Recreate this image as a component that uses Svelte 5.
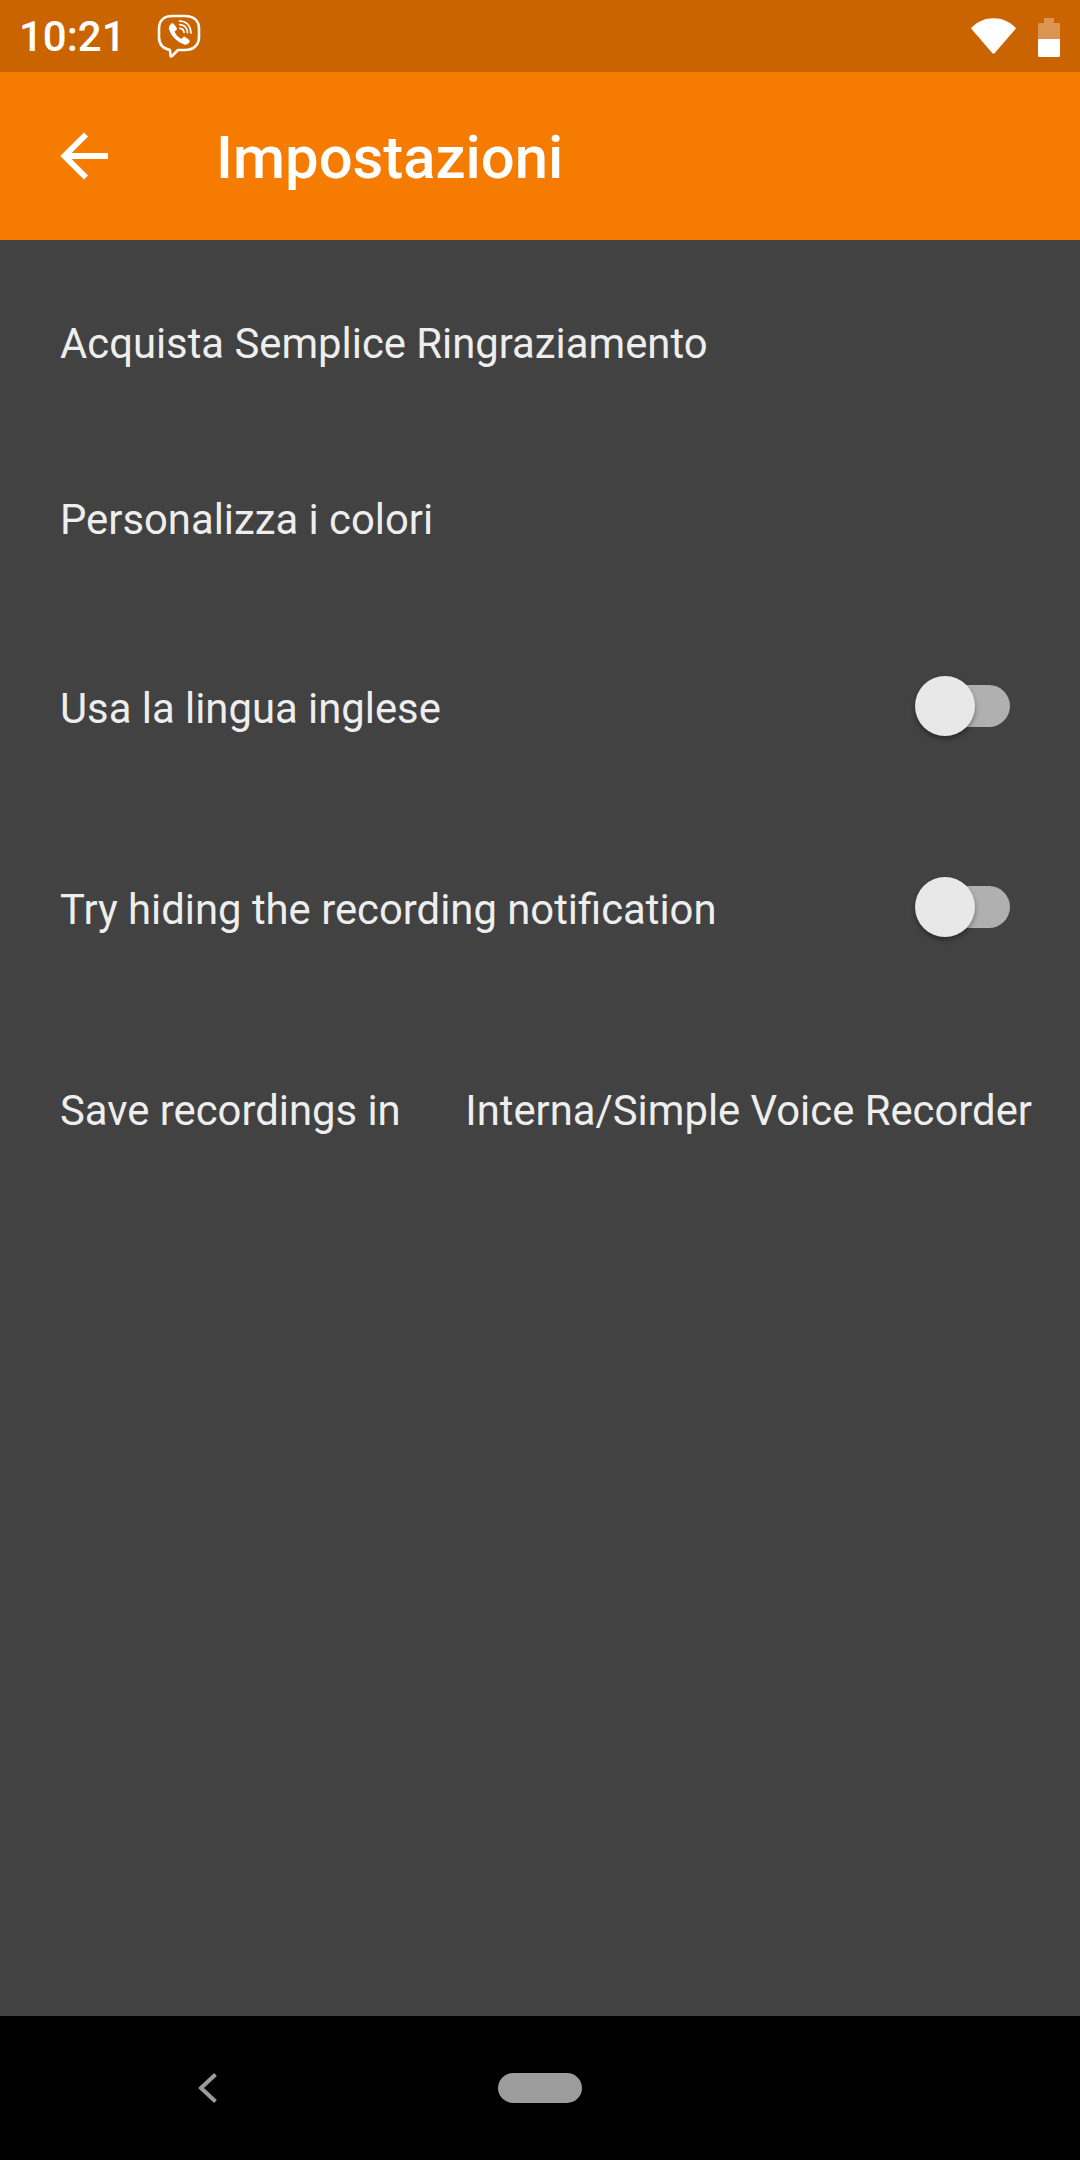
<script>
  const rows = [
    { label: "Acquista Semplice Ringraziamento", tall: false },
    { label: "Personalizza i colori", tall: false },
    { label: "Usa la lingua inglese", tall: true, toggle: true },
    { label: "Try hiding the recording notification", tall: true, toggle: true },
    { label: "Save recordings in", tall: true, value: "Interna/Simple Voice Recorder" }
  ];
</script>

<div class="screen">
  <header class="status">
    <span class="time">10:21</span>
    <svg class="viber" viewBox="0 0 46 46" width="46" height="46" fill="none" stroke="#fff">
      <path d="M14 37C6.500 35.500 3 31 3 24V16C3 7.500 8 3 16 3h13c8.500 0 14 4.500 14 13v8c0 8-5.500 13-14 13h-7l-6 6c-.8.700-1.500.4-1.500-.6z" stroke-width="2.600" stroke-linejoin="round" />
      <path d="M14.500 11c1.500-1 2.700-.8 3.700.5l2.200 3.100c.8 1.200.6 2.200-.5 3l-1.300 1c.8 3 3.500 6 7 7.500l1-1.400c.8-1 1.800-1.100 2.900-.4l3.200 2.200c1.200 1 1.200 2.100.3 3.300-1.200 1.700-3 2.300-4.800 1.700-7.500-2.700-12.900-8.200-15.200-15.200-.5-2 .3-3.800 1.900-5.300z" fill="#fff" stroke="none" />
      <path d="M23.500 8c6.500.3 11 4.500 11.500 12M23.800 11.700c4.200.3 7.300 3.200 7.700 8M24 15.300c2.200.2 3.700 1.700 4 4" stroke-width="1.700" stroke-linecap="round" />
    </svg>
    <span class="spacer"></span>
    <svg class="wifi" viewBox="0 0 45 36" width="45" height="36">
      <path d="M.6 9.500C6.500 3.500 14 .2 22.500.2S38.500 3.500 44.400 9.500c.5.500.5 1 .1 1.500L23.500 35.300c-.5.600-1.500.6-2 0L.5 11c-.4-.5-.4-1 .1-1.500z" fill="#fff" />
    </svg>
    <svg class="battery" viewBox="0 0 22 39" width="22" height="39">
      <path d="M6 0h10v5h4.500c.8 0 1.500.7 1.500 1.500V21H0V6.500C0 5.700.7 5 1.500 5H6z" fill="#fff" fill-opacity="0.32" />
      <path d="M0 21h22v16.500c0 .8-.7 1.500-1.500 1.500h-19C.7 39 0 38.300 0 37.500z" fill="#fff" />
    </svg>
  </header>

  <div class="toolbar">
    <svg class="back" viewBox="0 0 48 48" width="48" height="48" fill="none" stroke="#fff" stroke-width="6">
      <path d="M48 24H5M26 2.500 4.500 24 26 45.500" />
    </svg>
    <h1>Impostazioni</h1>
  </div>

  <main class="list">
    {#each rows as row}
      <div class="row" class:tall={row.tall}>
        <span>{row.label}</span>
        {#if row.toggle}
          <div class="switch"><div class="thumb"></div></div>
        {/if}
        {#if row.value}
          <span>{row.value}</span>
        {/if}
      </div>
    {/each}
  </main>

  <footer class="nav">
    <svg class="nav-back" viewBox="0 0 19 30" width="19" height="30" fill="none" stroke="#9c9c9c" stroke-width="4">
      <path d="M17.500 1.500 3 15l14.500 13.500" />
    </svg>
    <div class="home"></div>
  </footer>
</div>

<style>
  :global(body) {
    margin: 0;
    background: #424242;
  }

  .screen {
    width: 1080px;
    height: 2160px;
    display: flex;
    flex-direction: column;
    font-family: Roboto, "Liberation Sans", sans-serif;
    color: #fff;
    overflow: hidden;
  }

  .status {
    height: 72px;
    flex: none;
    background: #c96400;
    display: flex;
    align-items: center;
    padding: 0 20px 0 19px;
    box-sizing: border-box;
  }

  .time {
    font-size: 42px;
    font-weight: 500;
  }

  .viber {
    margin-left: 30px;
  }

  .spacer {
    flex: 1;
  }

  .battery {
    margin-left: 22px;
    margin-top: 2px;
  }

  .toolbar {
    height: 168px;
    flex: none;
    background: #f57c00;
    display: flex;
    align-items: center;
    padding-left: 60px;
  }

  .toolbar h1 {
    margin: 4px 0 0 108px;
    font-size: 59.800px;
    font-weight: 500;
  }

  .list {
    flex: 1;
    background: #424242;
    padding: 15px 48px 0 60px;
  }

  .row {
    height: 176px;
    display: flex;
    align-items: center;
    justify-content: space-between;
    font-size: 41.800px;
    color: #eeeeee;
  }

  .row.tall {
    height: 201px;
  }

  .row.tall span {
    padding-top: 2px;
  }

  .switch {
    position: relative;
    width: 92px;
    height: 42px;
    margin: 0 22px 4px 0;
    border-radius: 21px;
    background: #b0b0b0;
  }

  .thumb {
    position: absolute;
    left: -3px;
    top: -9px;
    width: 60px;
    height: 60px;
    border-radius: 50%;
    background: #e8e8e8;
    box-shadow: 0 3px 5px rgba(0, 0, 0, 0.35);
  }

  .nav {
    height: 144px;
    flex: none;
    background: #000;
    display: flex;
    align-items: center;
    padding-left: 198px;
  }

  .nav-back {
    margin-top: -1px;
  }

  .home {
    width: 84px;
    height: 30px;
    margin-left: 281px;
    margin-top: -1px;
    border-radius: 15px;
    background: #9c9c9c;
  }
</style>
